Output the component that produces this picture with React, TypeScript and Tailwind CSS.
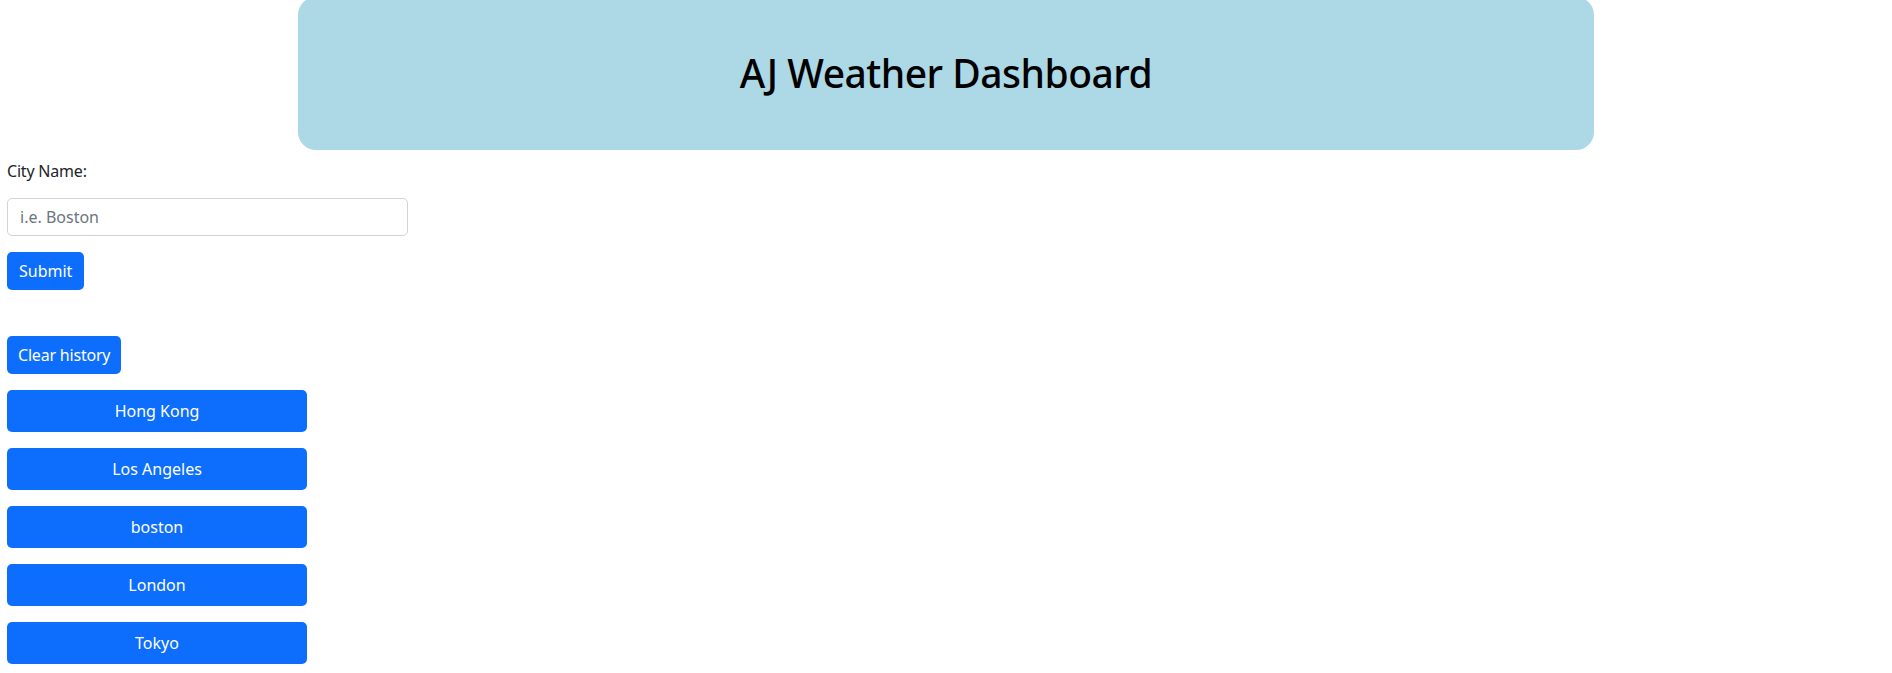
import React from 'react';

const history = ['Hong Kong', 'Los Angeles', 'boston', 'London', 'Tokyo'];

export default function App() {
  return (
    <div className="min-h-screen bg-white text-[#212529] text-base" style={{ fontFamily: '"Noto Sans", "Open Sans", sans-serif' }}>
      <header className="w-[1296px] mx-auto -mt-[3px] h-[153px] rounded-[18px] bg-[#add8e6] flex items-center justify-center">
        <h1 className="text-[39px] tracking-[-0.5px] font-medium text-black leading-tight">AJ Weather Dashboard</h1>
      </header>

      <div className="pl-[7px] pt-[9px]">
        <label className="block leading-6 h-[24px] tracking-[-0.2px]">City Name:</label>
        <input
          type="text"
          placeholder="i.e. Boston"
          className="mt-[15px] block w-[401px] h-[38px] px-3 border border-[#ced4da] rounded-[5px] placeholder:text-[#6c757d] outline-none"
        />
        <button className="mt-4 block h-[38px] px-3 bg-[#0d6efd] text-white rounded-[5px]">Submit</button>

        <button className="mt-[46px] block h-[38px] px-[11px] tracking-[-0.2px] bg-[#0d6efd] text-white rounded-[5px]">Clear history</button>

        <div className="mt-4 flex flex-col gap-4">
          {history.map((city) => (
            <button key={city} className="w-[300px] h-[42px] bg-[#0d6efd] text-white rounded-[5px]">
              {city}
            </button>
          ))}
        </div>
      </div>
    </div>
  );
}
